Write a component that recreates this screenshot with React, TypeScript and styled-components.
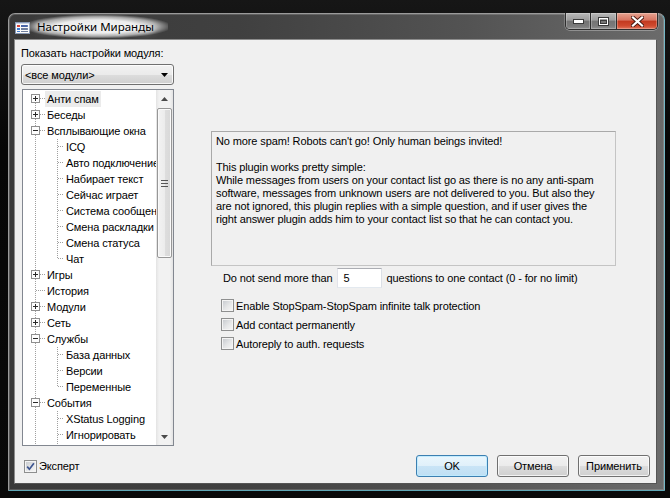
import React from 'react';
import styled, { createGlobalStyle } from 'styled-components';

const UI_FONT = `"Liberation Sans", Arial, sans-serif`;

const GlobalStyle = createGlobalStyle`
  html, body { margin: 0; padding: 0; background: #070707; }
  body { width: 670px; height: 498px; overflow: hidden; }
`;

const Desktop = styled.div`
  width: 670px;
  height: 498px;
  box-sizing: border-box;
  padding: 13px 5px 0 8px;
  background: linear-gradient(180deg, #161616 0%, #060606 30%, #090909 100%);
  font-family: ${UI_FONT};
  font-size: 11px;
  letter-spacing: -0.12px;
  color: #000;
`;

const Window = styled.div`
  width: 657px;
  height: 478px;
  box-sizing: border-box;
  display: flex;
  flex-direction: column;
  border: 1px solid #9a9a9a;
  border-right-color: #74b6c4;
  border-bottom-color: #5fa7b6;
  border-radius: 7px 7px 1px 1px;
  background: linear-gradient(90deg, #3a3a3a 0%, #404040 35%, #535353 70%, #6b6b6b 100%);
  box-shadow: inset 0 0 0 1px rgba(255, 255, 255, 0.16);
`;

const TitleBar = styled.div`
  height: 25px;
  flex: none;
  display: flex;
  align-items: center;
  padding: 0 6px;
`;

const Title = styled.span`
  font-family: "Noto Sans", "Segoe UI", sans-serif;
  font-size: 11.5px;
  letter-spacing: 0;
  color: #000;
  margin-left: -4px;
  padding: 4px 14px 4px 10px;
  background: radial-gradient(ellipse at center, rgba(255, 255, 255, 0.9) 40%, rgba(255, 255, 255, 0.55) 60%, rgba(255, 255, 255, 0) 75%);
  text-shadow: 0 0 4px #fff, 0 0 8px #fff;
`;

const CaptionButtons = styled.div`
  margin-left: auto;
  align-self: flex-start;
  margin-top: -1px;
  display: flex;
  height: 17px;
  box-sizing: border-box;
  border: 1px solid #2e2e2e;
  border-top: none;
  border-radius: 0 0 5px 5px;
  overflow: hidden;
  box-shadow: 0 1px 0 rgba(255, 255, 255, 0.3), 1px 0 0 rgba(255, 255, 255, 0.2), -1px 0 0 rgba(255, 255, 255, 0.2);
`;

const CapBtn = styled.div<{ $kind: 'min' | 'max' | 'close' }>`
  width: ${(p) => (p.$kind === 'min' ? 24 : p.$kind === 'max' ? 25 : 40)}px;
  display: flex;
  align-items: center;
  justify-content: center;
  box-shadow: inset 0 0 0 1px rgba(255, 255, 255, 0.25);
  background: ${(p) =>
    p.$kind === 'close'
      ? 'linear-gradient(180deg, #e7a391 0%, #d77561 45%, #c2391f 50%, #cf4a2f 80%, #e0765c 100%)'
      : 'linear-gradient(180deg, #b9b9b9 0%, #9c9c9c 45%, #747474 50%, #7a7a7a 80%, #8e8e8e 100%)'};
  & + & {
    border-left: 1px solid #2e2e2e;
  }
`;

const Client = styled.div`
  flex: 1;
  min-height: 0;
  overflow: hidden;
  margin: 0 7px 6px 5px;
  box-sizing: border-box;
  border: 1px solid #8c8c8c;
  border-right-color: #555;
  border-bottom-color: #555;
  background: #f0f0f0;
  padding: 6px;
  display: flex;
  flex-direction: column;
`;

const Main = styled.div`
  flex: 1;
  display: flex;
  min-height: 0;
`;

const LeftPane = styled.div`
  width: 153px;
  flex: none;
  min-height: 0;
  display: flex;
  flex-direction: column;
`;

const PaneLabel = styled.div`
  height: 14px;
  line-height: 14px;
  white-space: nowrap;
`;

const Combo = styled.div`
  margin-top: 4px;
  height: 21px;
  flex: none;
  box-sizing: border-box;
  border: 1px solid #707070;
  border-radius: 3px;
  background: linear-gradient(180deg, #f2f2f2 0%, #ebebeb 50%, #dddddd 51%, #cfcfcf 100%);
  box-shadow: inset 0 0 0 1px rgba(255, 255, 255, 0.8);
  display: flex;
  align-items: center;
  padding: 0 5px 0 3px;
  svg { margin-left: auto; }
`;

const Tree = styled.div`
  margin-top: 4px;
  margin-left: 1px;
  flex: 1;
  min-height: 0;
  box-sizing: border-box;
  border: 1px solid #828790;
  background: #fff;
  display: flex;
  overflow: hidden;
`;

const TreeBody = styled.div`
  flex: 1;
  min-width: 0;
  min-height: 0;
  overflow: hidden;
  padding-top: 1px;
`;

const TreeRow = styled.div`
  display: flex;
  height: 16px;
  white-space: nowrap;
`;

const ConnectorSvg = styled.svg`
  flex: none;
  display: block;
`;

const NodeLabel = styled.span<{ $sel?: boolean }>`
  padding: 0 2px;
  line-height: 16px;
  background: ${(p) => (p.$sel ? '#ebebeb' : 'transparent')};
`;

const ScrollBar = styled.div`
  width: 17px;
  flex: none;
  display: flex;
  flex-direction: column;
  background: linear-gradient(90deg, #e3e3e3 0%, #f2f2f2 18%, #f2f2f2 82%, #e3e3e3 100%);
`;

const ScrollArrow = styled.div`
  height: 17px;
  flex: none;
  display: flex;
  align-items: center;
  justify-content: center;
`;

const Track = styled.div`
  flex: 1;
  min-height: 0;
  padding: 1px 1px 0;
`;

const Thumb = styled.div`
  height: 150px;
  box-sizing: border-box;
  border: 1px solid #979797;
  border-radius: 2px;
  background: linear-gradient(90deg, #f3f3f3 0%, #ececec 50%, #dedede 51%, #d8d8d8 100%);
  box-shadow: inset 0 0 0 1px #fafafa;
  display: flex;
  align-items: center;
  justify-content: center;
`;

const RightPane = styled.div`
  margin-left: 37px;
  padding-top: 85px;
  width: 405px;
  flex: none;
`;

const InfoBox = styled.div`
  height: 135px;
  box-sizing: border-box;
  border: 1px solid #a9a9a9;
  border-right-color: #c4c4c4;
  border-bottom-color: #c4c4c4;
  padding: 3px 4px;
`;

const InfoLine = styled.div`
  height: 13px;
  line-height: 13px;
  white-space: nowrap;
`;

const SpamRow = styled.div`
  margin-top: 2px;
  height: 20px;
  display: flex;
  align-items: center;
  padding-left: 12px;
  white-space: nowrap;
`;

const Edit = styled.div`
  width: 45px;
  height: 20px;
  box-sizing: border-box;
  margin: 0 4px 0 5px;
  padding-left: 5px;
  display: flex;
  align-items: center;
  background: #fff;
  border: 1px solid;
  border-color: #abadb3 #dbdfe6 #e3e9ef #e2e3ea;
`;

const Checks = styled.div`
  margin-top: 11px;
  padding-left: 10px;
  display: flex;
  flex-direction: column;
  gap: 6px;
`;

const CheckRow = styled.label`
  height: 13px;
  display: flex;
  align-items: center;
  white-space: nowrap;
`;

const CheckText = styled.span`
  margin-left: 2px;
`;

const Box = styled.span`
  width: 13px;
  height: 13px;
  box-sizing: border-box;
  flex: none;
  border: 1px solid #8e8f8f;
  background: linear-gradient(135deg, #c3c7cc 0%, #e6e7e8 55%, #f7f7f7 100%);
  box-shadow: inset 0 0 0 1px #f4f4f4;
  display: flex;
  align-items: center;
  justify-content: center;
`;

const Footer = styled.div`
  margin-top: 9px;
  height: 22px;
  flex: none;
  display: flex;
  align-items: center;
  padding-left: 3px;
`;

const Buttons = styled.div`
  margin-left: auto;
  display: flex;
  gap: 9px;
`;

const Button = styled.div<{ $default?: boolean }>`
  width: 72px;
  height: 22px;
  box-sizing: border-box;
  display: flex;
  align-items: center;
  justify-content: center;
  border-radius: 3px;
  border: 1px solid ${(p) => (p.$default ? '#3c7fb1' : '#707070')};
  background: ${(p) =>
    p.$default
      ? 'linear-gradient(180deg, #eaf6fd 0%, #e0f0fa 50%, #c9e4f6 51%, #bfdff3 100%)'
      : 'linear-gradient(180deg, #f2f2f2 0%, #ebebeb 50%, #dddddd 51%, #cfcfcf 100%)'};
  box-shadow: inset 0 0 0 1px ${(p) => (p.$default ? 'rgba(190,235,255,0.9)' : 'rgba(255,255,255,0.75)')};
`;

type Item = { t: string; lvl: 1 | 2; box?: 'plus' | 'minus'; last?: boolean; sel?: boolean };

const ITEMS: Item[] = [
  { t: 'Анти спам', lvl: 1, box: 'plus', sel: true },
  { t: 'Беседы', lvl: 1, box: 'plus' },
  { t: 'Всплывающие окна', lvl: 1, box: 'minus' },
  { t: 'ICQ', lvl: 2 },
  { t: 'Авто подключение', lvl: 2 },
  { t: 'Набирает текст', lvl: 2 },
  { t: 'Сейчас играет', lvl: 2 },
  { t: 'Система сообщений', lvl: 2 },
  { t: 'Смена раскладки', lvl: 2 },
  { t: 'Смена статуса', lvl: 2 },
  { t: 'Чат', lvl: 2, last: true },
  { t: 'Игры', lvl: 1, box: 'plus' },
  { t: 'История', lvl: 1 },
  { t: 'Модули', lvl: 1, box: 'plus' },
  { t: 'Сеть', lvl: 1, box: 'plus' },
  { t: 'Службы', lvl: 1, box: 'minus' },
  { t: 'База данных', lvl: 2 },
  { t: 'Версии', lvl: 2 },
  { t: 'Переменные', lvl: 2, last: true },
  { t: 'События', lvl: 1, box: 'minus' },
  { t: 'XStatus Logging', lvl: 2 },
  { t: 'Игнорировать', lvl: 2 },
  { t: '', lvl: 2 },
];

const LINE = '#a0a0a0';
const dash = { stroke: LINE, strokeWidth: 1, strokeDasharray: '1 1' };

const Connector: React.FC<{ item: Item; first: boolean }> = ({ item, first }) => {
  const w = item.lvl === 1 ? 22 : 41;
  return (
    <ConnectorSvg width={w} height={16} viewBox={`0 0 ${w} 16`} shapeRendering="crispEdges">
      {item.box ? (
        <>
          {!first && <line x1={12.5} y1={0} x2={12.5} y2={3} {...dash} />}
          <line x1={12.5} y1={12} x2={12.5} y2={16} {...dash} />
          <rect x={8.5} y={3.5} width={8} height={8} fill="#fdfdfd" stroke="#8f8f8f" />
          <rect x={10} y={7} width={5} height={1} fill="#2a2a2a" />
          {item.box === 'plus' && <rect x={12} y={5} width={1} height={5} fill="#2a2a2a" />}
          <line x1={17} y1={7.5} x2={22} y2={7.5} {...dash} />
        </>
      ) : (
        <line x1={12.5} y1={0} x2={12.5} y2={16} {...dash} />
      )}
      {item.lvl === 1 && !item.box && <line x1={13} y1={7.5} x2={22} y2={7.5} {...dash} />}
      {item.lvl === 2 && (
        <>
          <line x1={34.5} y1={0} x2={34.5} y2={item.last ? 8 : 16} {...dash} />
          <line x1={35} y1={7.5} x2={41} y2={7.5} {...dash} />
        </>
      )}
    </ConnectorSvg>
  );
};

const CheckBox: React.FC<{ checked?: boolean }> = ({ checked }) => (
  <Box>
    {checked && (
      <svg width="9" height="9" viewBox="0 0 9 9">
        <path d="M1.2 4.6 L3.4 7.2 L7.9 1.2" fill="none" stroke="#3d5590" strokeWidth="1.7" />
      </svg>
    )}
  </Box>
);

const WindowIcon = () => (
  <svg width="16" height="16" viewBox="0 0 16 16">
    <rect x="0.5" y="3.5" width="14" height="11" fill="#fbfbfb" stroke="#8899b5" />
    <rect x="1" y="4" width="13" height="1" fill="#c9d4e6" />
    <rect x="2" y="6" width="3" height="2" fill="#d6453a" />
    <rect x="6" y="6" width="7" height="2" fill="#4a66a8" />
    <rect x="2" y="9" width="3" height="2" fill="#3c7bd0" />
    <rect x="6" y="9" width="7" height="2" fill="#6f7f9e" />
    <rect x="2" y="12" width="3" height="1" fill="#3c7bd0" />
    <rect x="6" y="12" width="7" height="1" fill="#6f7f9e" />
  </svg>
);

const INFO_LINES = [
  "No more spam! Robots can't go! Only human beings invited!",
  '',
  'This plugin works pretty simple:',
  'While messages from users on your contact list go as there is no any anti-spam',
  'software, messages from unknown users are not delivered to you. But also they',
  'are not ignored, this plugin replies with a simple question, and if user gives the',
  'right answer plugin adds him to your contact list so that he can contact you.',
];

export default function App() {
  return (
    <>
      <GlobalStyle />
      <Desktop>
        <Window>
          <TitleBar>
            <WindowIcon />
            <Title>Настройки Миранды</Title>
            <CaptionButtons>
              <CapBtn $kind="min">
                <svg width="11" height="5" viewBox="0 0 11 5">
                  <rect x="0.5" y="0.5" width="10" height="4" fill="#fff" stroke="#3a3a3a" />
                </svg>
              </CapBtn>
              <CapBtn $kind="max">
                <svg width="11" height="9" viewBox="0 0 11 9">
                  <rect x="0.5" y="0.5" width="10" height="8" fill="none" stroke="#3a3a3a" />
                  <rect x="1.5" y="1.5" width="8" height="6" fill="none" stroke="#fff" />
                  <rect x="2.5" y="3.5" width="6" height="3" fill="none" stroke="#3a3a3a" />
                </svg>
              </CapBtn>
              <CapBtn $kind="close">
                <svg width="13" height="11" viewBox="0 0 13 11">
                  <path d="M2 1.5 L11 9.5 M11 1.5 L2 9.5" stroke="#4a1a12" strokeWidth="4" strokeLinecap="square" />
                  <path d="M2 1.5 L11 9.5 M11 1.5 L2 9.5" stroke="#fff" strokeWidth="2.2" strokeLinecap="square" />
                </svg>
              </CapBtn>
            </CaptionButtons>
          </TitleBar>
          <Client>
            <Main>
              <LeftPane>
                <PaneLabel>Показать настройки модуля:</PaneLabel>
                <Combo>
                  <span>&lt;все модули&gt;</span>
                  <svg width="7" height="4" viewBox="0 0 7 4">
                    <path d="M0 0 H7 L3.5 4 Z" fill="#000" />
                  </svg>
                </Combo>
                <Tree>
                  <TreeBody>
                    {ITEMS.map((it, i) => (
                      <TreeRow key={i}>
                        <Connector item={it} first={i === 0} />
                        {it.t && <NodeLabel $sel={it.sel}>{it.t}</NodeLabel>}
                      </TreeRow>
                    ))}
                  </TreeBody>
                  <ScrollBar>
                    <ScrollArrow>
                      <svg width="7" height="4" viewBox="0 0 7 4">
                        <path d="M0 4 H7 L3.5 0 Z" fill="#4a4a4a" />
                      </svg>
                    </ScrollArrow>
                    <Track>
                      <Thumb>
                        <svg width="7" height="7" viewBox="0 0 7 7">
                          <rect x="0" y="0" width="7" height="1" fill="#555" />
                          <rect x="0" y="3" width="7" height="1" fill="#555" />
                          <rect x="0" y="6" width="7" height="1" fill="#555" />
                        </svg>
                      </Thumb>
                    </Track>
                    <ScrollArrow>
                      <svg width="7" height="4" viewBox="0 0 7 4">
                        <path d="M0 0 H7 L3.5 4 Z" fill="#4a4a4a" />
                      </svg>
                    </ScrollArrow>
                  </ScrollBar>
                </Tree>
              </LeftPane>
              <RightPane>
                <InfoBox>
                  {INFO_LINES.map((l, i) => (
                    <InfoLine key={i}>{l}</InfoLine>
                  ))}
                </InfoBox>
                <SpamRow>
                  <span>Do not send more than</span>
                  <Edit>5</Edit>
                  <span>questions to one contact (0 - for no limit)</span>
                </SpamRow>
                <Checks>
                  <CheckRow>
                    <CheckBox />
                    <CheckText>Enable StopSpam-StopSpam infinite talk protection</CheckText>
                  </CheckRow>
                  <CheckRow>
                    <CheckBox />
                    <CheckText>Add contact permanently</CheckText>
                  </CheckRow>
                  <CheckRow>
                    <CheckBox />
                    <CheckText>Autoreply to auth. requests</CheckText>
                  </CheckRow>
                </Checks>
              </RightPane>
            </Main>
            <Footer>
              <CheckBox checked />
              <CheckText>Эксперт</CheckText>
              <Buttons>
                <Button $default>OK</Button>
                <Button>Отмена</Button>
                <Button>Применить</Button>
              </Buttons>
            </Footer>
          </Client>
        </Window>
      </Desktop>
    </>
  );
}
